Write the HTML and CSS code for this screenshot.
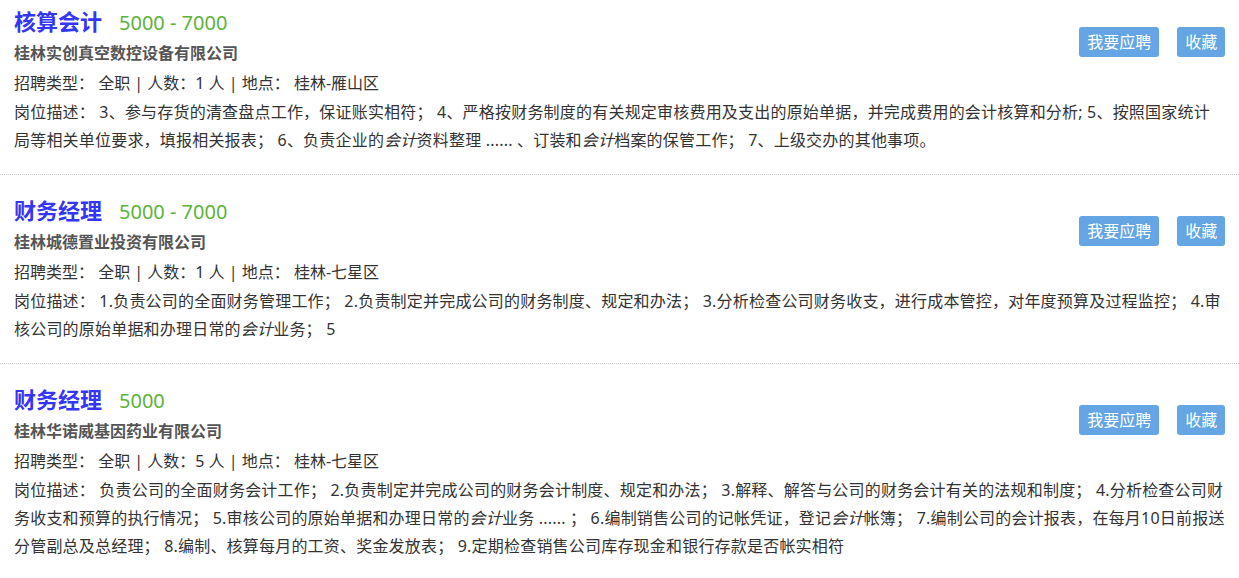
FILE: index.html
```html
<!DOCTYPE html>
<html lang="zh-CN">
<head>
    <meta charset="UTF-8">
    <meta name="viewport" content="width=device-width, initial-scale=1.0">
    <title>招聘信息</title>
    <link rel="stylesheet" href="styles.css">
</head>
<body>
    <div class="job-list">
        <div class="job">
            <div class="job-head">
                <div class="job-title-box">
                    <div class="job-title">
                        <a class="job-name">核算会计</a>
                        <span class="salary">5000 - 7000</span>
                    </div>
                    <div class="company">桂林实创真空数控设备有限公司</div>
                </div>
                <div class="job-actions">
                    <button class="btn">我要应聘</button>
                    <button class="btn">收藏</button>
                </div>
            </div>
            <p class="info">招聘类型：&nbsp;全职 | 人数：1 人 | 地点：&nbsp;桂林-雁山区</p>
            <p class="desc">岗位描述：&nbsp;3、参与存货的清查盘点工作，保证账实相符；&nbsp;4、严格按财务制度的有关规定审核费用及支出的原始单据，并完成费用的会计核算和分析; 5、按照国家统计局等相关单位要求，填报相关报表；&nbsp;6、负责企业的<em>会计</em>资料整理 ...... 、订装和<em>会计</em>档案的保管工作；&nbsp;7、上级交办的其他事项。</p>
        </div>

        <div class="job">
            <div class="job-head">
                <div class="job-title-box">
                    <div class="job-title">
                        <a class="job-name">财务经理</a>
                        <span class="salary">5000 - 7000</span>
                    </div>
                    <div class="company">桂林城德置业投资有限公司</div>
                </div>
                <div class="job-actions">
                    <button class="btn">我要应聘</button>
                    <button class="btn">收藏</button>
                </div>
            </div>
            <p class="info">招聘类型：&nbsp;全职 | 人数：1 人 | 地点：&nbsp;桂林-七星区</p>
            <p class="desc">岗位描述：&nbsp;1.负责公司的全面财务管理工作；&nbsp;2.负责制定并完成公司的财务制度、规定和办法；&nbsp;3.分析检查公司财务收支，进行成本管控，对年度预算及过程监控；&nbsp;4.审核公司的原始单据和办理日常的<em>会计</em>业务；&nbsp;5</p>
        </div>

        <div class="job">
            <div class="job-head">
                <div class="job-title-box">
                    <div class="job-title">
                        <a class="job-name">财务经理</a>
                        <span class="salary">5000</span>
                    </div>
                    <div class="company">桂林华诺威基因药业有限公司</div>
                </div>
                <div class="job-actions">
                    <button class="btn">我要应聘</button>
                    <button class="btn">收藏</button>
                </div>
            </div>
            <p class="info">招聘类型：&nbsp;全职 | 人数：5 人 | 地点：&nbsp;桂林-七星区</p>
            <p class="desc">岗位描述：&nbsp;负责公司的全面财务会计工作；&nbsp;2.负责制定并完成公司的财务会计制度、规定和办法；&nbsp;3.解释、解答与公司的财务会计有关的法规和制度；&nbsp;4.分析检查公司财务收支和预算的执行情况；&nbsp;5.审核公司的原始单据和办理日常的<em>会计</em>业务 ...... ；&nbsp;6.编制销售公司的记帐凭证，登记<em>会计</em>帐簿；&nbsp;7.编制公司的会计报表，在每月10日前报送分管副总及总经理；&nbsp;8.编制、核算每月的工资、奖金发放表；&nbsp;9.定期检查销售公司库存现金和银行存款是否帐实相符</p>
        </div>
    </div>
</body>
</html>
```

FILE: styles.css
```css
body, html {
    margin: 0;
    padding: 0;
    background-color: #fff;
    color: #333;
    font-family: "Noto Sans", "Noto Sans CJK SC", sans-serif;
    font-size: 16px;
}
.job {
    padding: 22px 13.7px 20px 14px;
    border-bottom: 1px dotted #c8c8c8;
}
.job:first-child {
    padding-top: 8px;
}
.job-head {
    display: flex;
    justify-content: space-between;
    align-items: flex-start;
}
.job-title {
    display: flex;
    align-items: baseline;
    gap: 17px;
    height: 30px;
    line-height: 26px;
}
.job-name {
    color: #3535f5;
    font-size: 22px;
    font-weight: bold;
    cursor: pointer;
}
.salary {
    color: #5db33a;
    font-size: 20px;
}
.company {
    color: #555;
    font-weight: bold;
    line-height: 30px;
}
.job-actions {
    display: flex;
    gap: 18px;
    margin-top: 19px;
}
.btn {
    height: 30px;
    padding: 0 8px;
    border: none;
    border-radius: 3px;
    background-color: #65a5e4;
    color: #fff;
    font-family: inherit;
    font-size: 16px;
    line-height: 30px;
    cursor: pointer;
}
.info {
    margin: 0;
    line-height: 30px;
}
.desc {
    margin: 0;
    line-height: 28px;
    letter-spacing: 0.2px;
}
```
